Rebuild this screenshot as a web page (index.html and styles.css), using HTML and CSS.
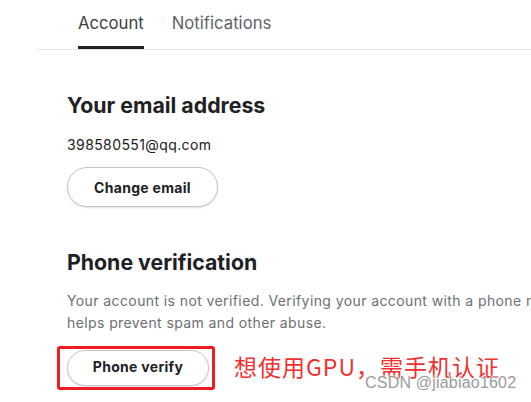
FILE: index.html
```html
<!DOCTYPE html>
<html lang="en">
<head>
<meta charset="utf-8">
<title>Account settings</title>
<link rel="stylesheet" href="styles.css">
</head>
<body>
<div class="page">
  <nav class="tabs">
    <a class="tab active">Account</a>
    <a class="tab">Notifications</a>
  </nav>
  <main class="content">
    <section class="section">
      <h2 class="title">Your email address</h2>
      <p class="email">398580551@qq.com</p>
      <button class="btn btn-email">Change email</button>
    </section>
    <section class="section section-phone">
      <h2 class="title">Phone verification</h2>
      <p class="desc">Your account is not verified. Verifying your account with a phone number helps prevent spam and other abuse.</p>
      <div class="verify-row">
        <button class="btn btn-phone">Phone verify</button>
        <span class="mark-box"></span>
        <span class="mark-text">想使用GPU，需手机认证</span>
        <span class="watermark">CSDN @jiabiao1602</span>
      </div>
    </section>
  </main>
</div>
</body>
</html>
```

FILE: styles.css
```css
* { box-sizing: border-box; }
html, body { margin: 0; padding: 0; background: #fff; }
body {
  font-family: Inter, "Noto Sans", sans-serif;
  color: #202124;
  overflow: hidden;
  width: 531px;
  height: 402px;
}
.page { width: 531px; }
.tabs {
  display: flex;
  gap: 28px;
  margin-left: 37px;
  padding-left: 41px;
  border-bottom: 1px solid #e3e3e3;
  height: 50px;
}
.tab {
  font-size: 16.7px;
  line-height: 20px;
  padding-top: 13px;
  color: #5f6368;
  height: 49px;
}
.tab.active {
  color: #3c4043;
  border-bottom: 3px solid #202124;
}
.content { padding-left: 67px; }
.title {
  margin: 0;
  font-size: 21.3px;
  line-height: 24px;
  font-weight: 700;
  color: #202124;
}
.section { padding-top: 43px; }
.email {
  margin: 18px 0 12px;
  font-size: 14px;
  line-height: 20px;
  letter-spacing: 0.4px;
  color: #202124;
}
.btn {
  display: block;
  font-family: Inter, "Noto Sans", sans-serif;
  font-weight: 700;
  font-size: 14px;
  letter-spacing: 0.3px;
  color: #202124;
  background: #fff;
  border: 1px solid #c4c4c4;
  border-radius: 20px;
  box-shadow: 0 1px 2px rgba(0,0,0,0.12);
  padding: 0;
}
.btn-email { width: 151px; height: 40px; }
.desc {
  margin: 16px 0 0;
  width: 525px;
  font-size: 14px;
  line-height: 22px;
  letter-spacing: 0.4px;
  color: #6d6f73;
}
.verify-row {
  position: relative;
  margin-top: 16px;
  height: 36px;
}
.btn-phone { width: 142px; height: 36px; border-radius: 18px; padding-bottom: 3px; }
.mark-box {
  position: absolute;
  left: -10px;
  top: -4px;
  width: 158px;
  height: 44px;
  border: 3px solid #ee1c25;
  border-radius: 3px;
}
.mark-text {
  position: absolute;
  left: 167px;
  top: 2px;
  white-space: nowrap;
  font-family: "Noto Sans CJK SC", sans-serif;
  font-size: 23px;
  line-height: 28px;
  letter-spacing: 1px;
  color: #f0312f;
}
.watermark {
  position: absolute;
  left: 298px;
  top: 24px;
  white-space: nowrap;
  font-family: "Liberation Sans", Arial, sans-serif;
  font-size: 16px;
  line-height: 17px;
  letter-spacing: 0.2px;
  color: #9a9a9a;
  text-shadow: 0 0 2px #fff, 0 0 2px #fff, 0 0 2px #fff;
}
```
